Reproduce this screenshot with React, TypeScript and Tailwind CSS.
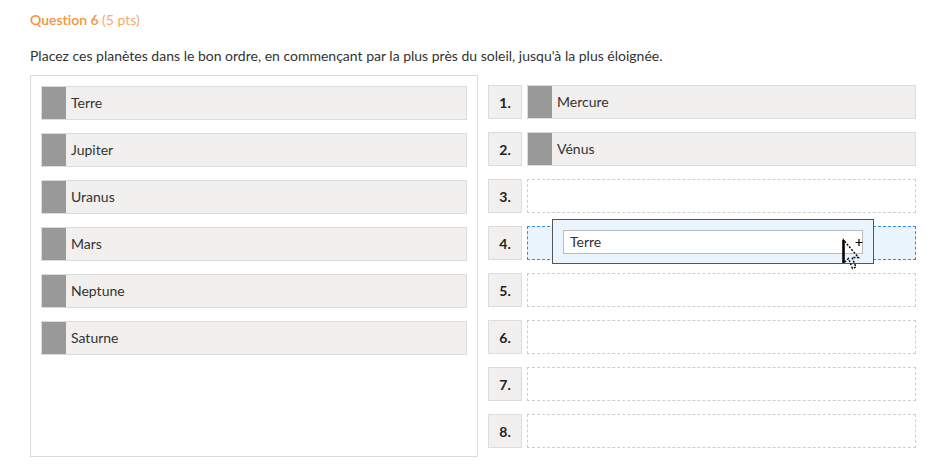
import React from 'react';

const pool = ['Terre', 'Jupiter', 'Uranus', 'Mars', 'Neptune', 'Saturne'];
const placed: Record<number, string> = { 1: 'Mercure', 2: 'Vénus' };

function Item({ label }: { label: string }) {
  return (
    <div className="flex h-[34px] border border-[#dcdcdc] bg-[#f1f0ee]">
      <div className="w-[24px] bg-[#999999]" />
      <span className="pl-[5px] leading-[31px] text-[#333]">{label}</span>
    </div>
  );
}

function Cursor() {
  return (
    <svg className="absolute left-[841px] top-[238px]" width="26" height="36" viewBox="0 0 26 36">
      <path d="M2.5 2 L2.5 25 L7.5 20.5 L11.5 30.5 L15 29 L11 19.5 L17.5 19.5 Z" fill="none" stroke="black" strokeWidth="1.4" strokeDasharray="2 1.5" />
      <path d="M2.5 2 L2.5 25" stroke="black" strokeWidth="2.5" />
      <path d="M18 1 V8 M14.5 4.5 H21.5" stroke="black" strokeWidth="1.2" />
    </svg>
  );
}

export default function App() {
  return (
    <div className="relative h-[470px] w-[941px] bg-white pl-[30px] pt-[10px] text-[14px] text-[#333] [font-variant-ligatures:none]" style={{ fontFamily: 'Lato, "Open Sans", sans-serif' }}>
      <h2 className="text-[14px] font-semibold leading-[20px] text-[#f7923b]">
        Question 6 <span className="font-normal text-[#f9a96e]">(5 pts)</span>
      </h2>
      <p className="mt-[16px] leading-[20px] text-[#333]">
        Placez ces planètes dans le bon ordre, en commençant par la plus près du soleil, jusqu'à la plus éloignée.
      </p>
      <div className="mt-[9px] flex gap-[10px]">
        <div className="flex h-[382px] w-[448px] flex-col gap-[13px] border border-[#dcdcdc] p-[10px]">
          {pool.map((p) => (
            <Item key={p} label={p} />
          ))}
        </div>
        <div className="flex flex-col gap-[13px] pt-[10px]">
          {[1, 2, 3, 4, 5, 6, 7, 8].map((n) => (
            <div key={n} className="flex gap-[5px]">
              <div className="flex h-[34px] w-[34px] items-center justify-center border border-[#dcdcdc] bg-[#f1f0ee] font-bold text-[#222]">
                {n}.
              </div>
              <div className="w-[389px]">
                {placed[n] ? (
                  <Item label={placed[n]} />
                ) : n === 4 ? (
                  <div className="h-[34px] border border-dashed border-[#2b8ef0] bg-[#eaf4fd]" />
                ) : (
                  <div className="h-[34px] border border-dashed border-[#cfcfcf]" />
                )}
              </div>
            </div>
          ))}
        </div>
      </div>
      <div className="absolute left-[552px] top-[219px] h-[45px] w-[322px] border border-[#555] bg-[#eaf4fd] px-[10px] pt-[10px]">
        <div className="h-[24px] border border-[#bbb] bg-white pl-[6px] leading-[22px] text-[#333]">Terre</div>
      </div>
      <Cursor />
    </div>
  );
}
